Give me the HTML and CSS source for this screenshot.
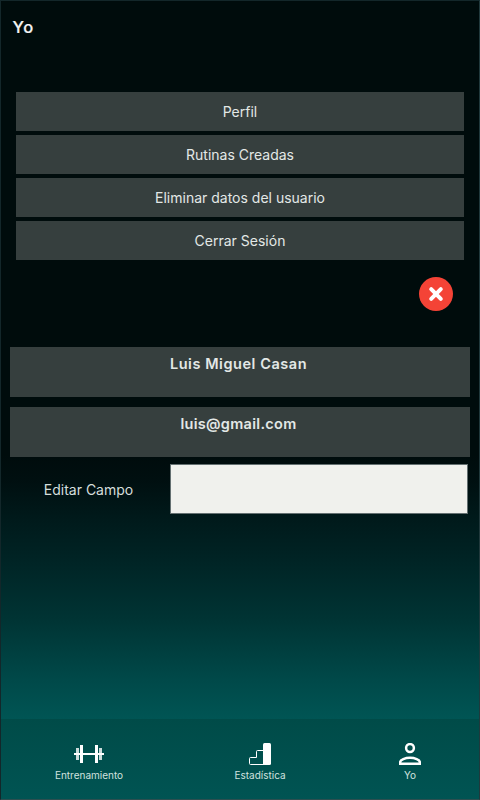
FILE: index.html
```html
<!DOCTYPE html>
<html lang="es">
<head>
<meta charset="utf-8">
<title>Yo</title>
<link rel="stylesheet" href="styles.css">
</head>
<body>
<div class="app">
  <header class="header"><h1 class="title">Yo</h1></header>
  <main class="content">
    <div class="menu">
      <button class="menu-item">Perfil</button>
      <button class="menu-item">Rutinas Creadas</button>
      <button class="menu-item">Eliminar datos del usuario</button>
      <button class="menu-item">Cerrar Sesión</button>
    </div>
    <div class="close-row">
      <button class="close" aria-label="Cerrar">
        <svg width="34" height="34" viewBox="0 0 34 34"><circle cx="17" cy="17" r="17" fill="#f44336"/><path d="M12.200 12.200l9.600 9.600M21.800 12.200l-9.600 9.600" stroke="#fff" stroke-width="4" stroke-linecap="round"/></svg>
      </button>
    </div>
    <div class="data">
      <div class="field name">Luis Miguel Casan</div>
      <div class="field email">luis@gmail.com</div>
    </div>
    <div class="edit">
      <label class="edit-label" for="campo">Editar Campo</label>
      <input class="edit-input" id="campo" type="text">
    </div>
  </main>
  <nav class="nav">
    <a class="tab training">
      <svg width="30" height="22" viewBox="0 0 30 22" fill="#fff"><path d="M6 2h3v18H6zM21 2h3v18h-3zM9 10h12v2H9zM0 10h2v2H0zM28 10h2v2h-2z"/><path d="M2 5h3v12H2zM25 5h3v12h-3z" opacity=".8"/><path d="M2 10h4v2H2zM24 10h4v2h-4z"/></svg>
      <span>Entrenamiento</span>
    </a>
    <a class="tab stats">
      <svg width="22" height="22" viewBox="0 0 22 22"><path d="M14.5 7.5h-6q-1 0-1 1v6h-6q-1 0-1 1v5q0 1 1 1h14" fill="none" stroke="#fff"/><rect x="14" width="8" height="22" rx="1.5" fill="#fff"/></svg>
      <span>Estadística</span>
    </a>
    <a class="tab me">
      <svg width="22" height="22" viewBox="0 0 22 22" fill="none" stroke="#fff" stroke-width="2.500"><circle cx="11" cy="5" r="3.900"/><path d="M1.200 20.800v-1.800c0-2.300 5-4.200 9.800-4.200s9.800 1.900 9.800 4.200v1.800z"/></svg>
      <span>Yo</span>
    </a>
  </nav>
</div>
</body>
</html>
```

FILE: styles.css
```css
* { box-sizing: border-box; }

body {
  margin: 0;
  font-family: Inter, sans-serif;
  color: #e3e8e6;
}

.app {
  display: flex;
  flex-direction: column;
  height: 800px;
  border: 1px solid #13272a;
  border-right-color: #21393c;
  border-bottom-color: #2d4f50;
  background: #000c0c;
}

.header {
  height: 54px;
  padding: 15px 11.5px;
}

.title {
  margin: 0;
  font-size: 16.5px;
  line-height: 22px;
  font-weight: 500;
  letter-spacing: 0.8px;
  color: #f4f4f4;
  -webkit-text-stroke: 0.2px #f4f4f4;
}

.content {
  flex: 1;
  padding-top: 37px;
  background: linear-gradient(#000c0c 0, #000c0c 400px, #000f10 425px, #001a1b 465px, #002526 510px, #003434 565px, #004949 625px, #005554 664px);
}

.menu {
  display: flex;
  flex-direction: column;
  gap: 4px;
  padding: 0 15px;
}

.menu-item {
  height: 39px;
  padding: 0;
  border: 0;
  background: #363f3e;
  color: #e3e8e6;
  font: 14px Inter, sans-serif;
}

.close-row {
  display: flex;
  justify-content: flex-end;
  padding: 17px 26px 36px 0;
}

.close {
  width: 34px;
  height: 34px;
  padding: 0;
  border: 0;
  background: none;
}

.close svg { display: block; }

.data {
  display: flex;
  flex-direction: column;
  gap: 10px;
  padding: 0 9px;
}

.field {
  height: 50px;
  padding: 7px 3px 0 0;
  background: #363f3e;
  font-size: 14.5px;
  line-height: 20px;
  font-weight: 600;
  letter-spacing: 0.3px;
  text-align: center;
}

.name {
  letter-spacing: 0.55px;
}

.edit {
  display: flex;
  align-items: center;
  padding: 7px 11px 0 9px;
}

.edit-label {
  width: 160px;
  padding-top: 1px;
  padding-right: 3px;
  font-size: 14px;
  text-align: center;
  color: #d5dedc;
}

.edit-input {
  flex: 1;
  height: 50px;
  border: 1px solid #647071;
  border-radius: 0;
  background: #f0f1ed;
}

.nav {
  display: grid;
  grid-template-columns: 176px 166px 134px;
  height: 80px;
  padding-top: 24px;
  background: linear-gradient(#004b48, #005453);
}

.tab {
  display: flex;
  flex-direction: column;
  align-items: center;
  gap: 3px;
  font-size: 10px;
  line-height: 14px;
  color: #d0e1df;
}
```
